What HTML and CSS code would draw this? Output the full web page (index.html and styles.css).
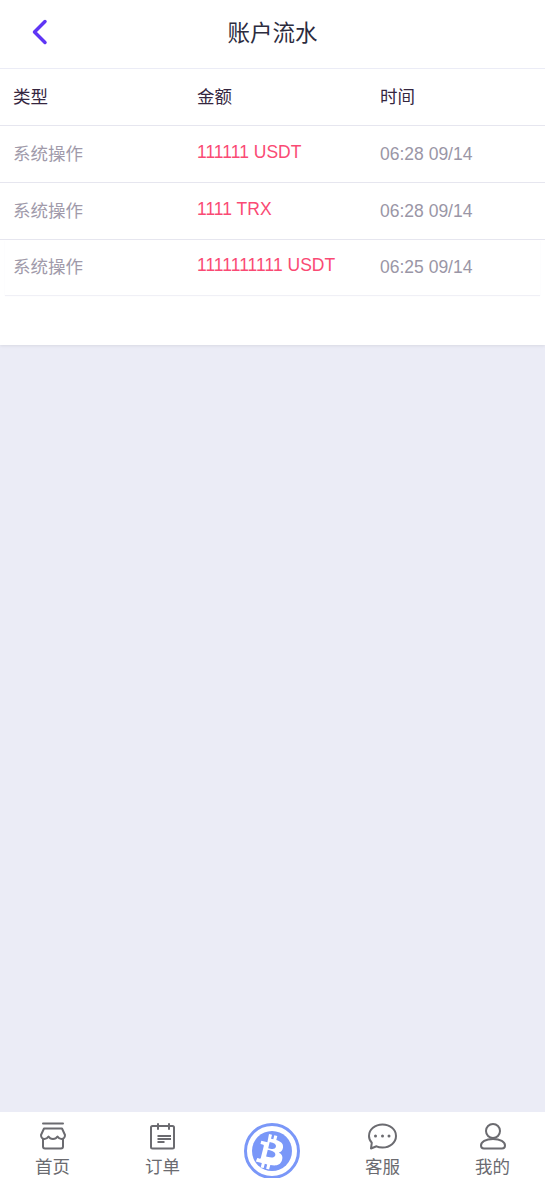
FILE: index.html
```html
<!DOCTYPE html>
<html lang="zh-CN">
<head>
    <meta charset="UTF-8">
    <meta name="viewport" content="width=device-width, initial-scale=1.0">
    <title>账户流水</title>
    <link rel="stylesheet" href="styles.css">
</head>
<body>
    <div class="page">
        <div class="card">
            <div class="topbar">
                <svg class="back" width="20" height="28" viewBox="0 0 20 28"><path d="M15 3.500 4.500 14 15 24.500" fill="none" stroke="#5f35f5" stroke-width="3.500" stroke-linecap="round" stroke-linejoin="round"/></svg>
                <h1>账户流水</h1>
            </div>
            <div class="row head">
                <div>类型</div>
                <div>金额</div>
                <div>时间</div>
            </div>
            <div class="row">
                <div class="type">系统操作</div>
                <div class="amount">111111 USDT</div>
                <div class="time">06:28 09/14</div>
            </div>
            <div class="row">
                <div class="type">系统操作</div>
                <div class="amount">1111 TRX</div>
                <div class="time">06:28 09/14</div>
            </div>
            <div class="row last">
                <div class="type">系统操作</div>
                <div class="amount">1111111111 USDT</div>
                <div class="time">06:25 09/14</div>
            </div>
        </div>

        <div class="tabbar">
            <div class="tab">
                <svg width="30" height="30" viewBox="0 0 30 30" fill="none" stroke="#6b6b70" stroke-width="2"><path d="M5 2.500h20" stroke-linecap="round"/><path d="M6 7.500h18l3 6.500c0 2.200-1.500 4-3.400 4-1.700 0-3.200-1-4.100-2.500-.9 1.500-2.600 2.500-4.500 2.500s-3.600-1-4.500-2.500C9.600 17 8.100 18 6.400 18 4.500 18 3 16.200 3 14z" stroke-linejoin="round"/><path d="M5 17v8.500c0 1.200.8 2 2 2h16c1.200 0 2-.8 2-2V17"/></svg>
                <span>首页</span>
            </div>
            <div class="tab">
                <svg width="30" height="30" viewBox="0 0 30 30" fill="none" stroke="#6b6b70" stroke-width="2"><rect x="3" y="5" width="23" height="22.500" rx="1.500"/><path d="M10 3v5M21 3v5" stroke-linecap="round"/><path d="M9.500 15h13.500M9.500 18h13.500M9.500 21h7"/></svg>
                <span>订单</span>
            </div>
            <div class="tab">
                <svg class="coin" width="56" height="56" viewBox="0 0 56 56">
                    <circle cx="28" cy="28" r="26.500" fill="none" stroke="#7a97f8" stroke-width="3"/>
                    <circle cx="28" cy="28" r="20" fill="#7a97f8"/>
                    <path fill="#fff" fill-rule="evenodd" d="M25 11l3 .7-1 4.100 2.300.5 1-4.100 3 .7-1 4.200c4.300 1.300 7.300 3.500 6.700 7.600-.4 2.800-2 4.300-4.200 4.800 3 1.600 4.500 4 3.100 8-1.800 5-6 5.500-11.600 4.500l-1.200 4.400-3-.7 1.100-4.300-2.400-.6-1.100 4.300-3-.7 1.100-4.400-6-1.500 1.500-3.400s2.200.6 2.200.6c.8.200 1.200-.3 1.300-.7l3-12.100c0-.5-.1-1.100-1.100-1.400 0 0-2.200-.5-2.200-.5l.8-3.200 6.100 1.500zm-1.200 15.700-1.700 6.800c2 .5 8.300 2.500 9.200-1.300 1-3.900-5.400-5-7.500-5.500zm1.900-7.700-1.500 6.200c1.700.4 6.900 2.100 7.700-1.400.9-3.500-4.500-4.400-6.200-4.800z"/>
                </svg>
            </div>
            <div class="tab">
                <svg width="30" height="30" viewBox="0 0 30 30" fill="none" stroke="#6b6b70" stroke-width="2"><path d="M14.500 3.500c7.500 0 13.500 5 13.500 11.500s-6 11.500-13.500 11.500c-2.500 0-4.500-.4-6-1.200L3 27.500l.8-5.800C1.800 19.800 1 17.500 1 15 1 8.500 7 3.500 14.500 3.500z" stroke-linejoin="round"/><circle cx="7.500" cy="15" r="1.500" fill="#6b6b70" stroke="none"/><circle cx="14.500" cy="15" r="1.500" fill="#6b6b70" stroke="none"/><circle cx="21" cy="15" r="1.500" fill="#6b6b70" stroke="none"/></svg>
                <span>客服</span>
            </div>
            <div class="tab">
                <svg width="30" height="30" viewBox="0 0 30 30" fill="none" stroke="#6b6b70" stroke-width="2"><circle cx="15" cy="10" r="7"/><path d="M6 27.500h18c2 0 3-1.200 3-3 0-3.500-4.500-6.500-12-6.500S3 21 3 24.500c0 1.800 1 3 3 3z"/></svg>
                <span>我的</span>
            </div>
        </div>
    </div>
</body>
</html>
```

FILE: styles.css
```css
* {
    box-sizing: border-box;
    margin: 0;
    padding: 0;
}
body {
    font-family: "Liberation Sans", "Noto Sans CJK SC", sans-serif;
    background-color: #ebecf6;
    font-size: 17.5px;
}
.page {
    height: 1178px;
    display: flex;
    flex-direction: column;
    justify-content: space-between;
    overflow: hidden;
}
.card {
    height: 345px;
    background-color: #fff;
    box-shadow: 0 1px 3px rgba(0, 0, 0, 0.08);
}
.topbar {
    height: 69px;
    position: relative;
    display: flex;
    align-items: center;
    justify-content: center;
    padding-bottom: 7px;
    border-bottom: 1px solid #ebecf6;
}
.topbar h1 {
    font-size: 22.5px;
    font-weight: 400;
    color: #2c2c3e;
}
.back {
    position: absolute;
    left: 30px;
    top: 18px;
}
.row {
    height: 57px;
    display: grid;
    grid-template-columns: 184px 183px 1fr;
    align-items: center;
    padding-left: 13px;
    border-bottom: 1px solid #e6e6ef;
}
.head {
    color: #35263f;
    padding-bottom: 4px;
}
.last {
    height: 55px;
    border-bottom: none;
    box-shadow: 0 1px 1px #f0f0f6;
    margin: 0 5px;
    padding-left: 8px;
}
.type {
    color: #a09aaa;
    padding-bottom: 4px;
}
.amount {
    color: #fa4a74;
    padding-bottom: 4px;
}
.time {
    color: #9a96a6;
}
.tabbar {
    height: 66px;
    display: flex;
    justify-content: center;
    background-color: #fff;
}
.tab {
    flex: 0 0 110px;
    display: flex;
    flex-direction: column;
    align-items: center;
    padding-top: 9px;
    color: #6b6b70;
    line-height: 22px;
}
.tab svg {
    flex: none;
}
.tab span {
    margin-top: 5px;
}
.coin {
    margin-top: 2px;
    margin-right: 1px;
}
```
